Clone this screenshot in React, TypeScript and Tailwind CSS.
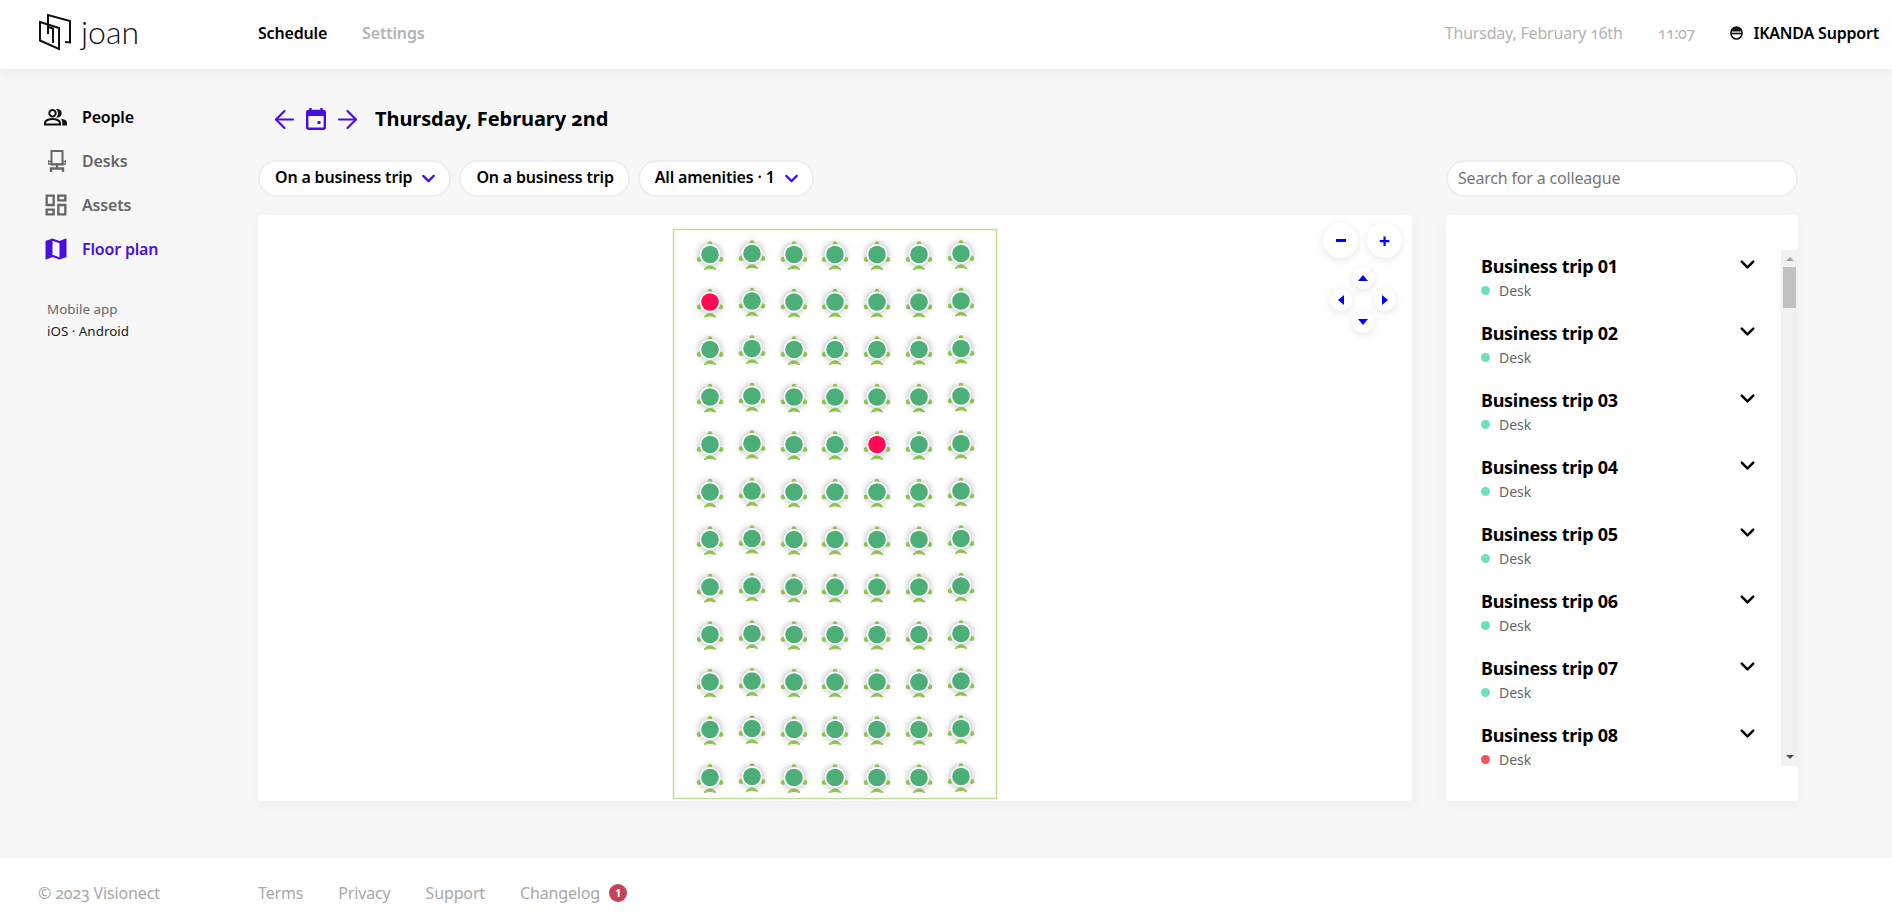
import { ArrowLeft, ArrowRight, ChevronDown } from "lucide-react";
import { MdMap, MdOutlineDashboard } from "react-icons/md";

const COLS = [452, 494, 536, 577, 619, 661, 703];
const ROWS = [39.5, 87, 134.5, 182, 229.5, 277, 324.5, 372, 419.5, 467, 514.5, 562.5];
const RED_PINS = ["1-0", "4-4"];

const trips = [1, 2, 3, 4, 5, 6, 7, 8];

function Logo() {
  return (
    <svg width="33" height="38" viewBox="0 0 33 38" fill="none" stroke="#111" strokeWidth="2">
      <path d="M1 9 L20 15 V36 L1 27.5 Z" />
      <path d="M9 9 V2 L31 8 V29.5 L26 29" />
      <path d="M9 2 V21" />
      <path d="M9 14 L14 15.5 V30" />
    </svg>
  );
}

function PeopleIcon() {
  return (
    <svg width="23" height="17" viewBox="0 0 23 17" fill="none">
      <circle cx="8.5" cy="4.2" r="3.2" stroke="#111" strokeWidth="2" />
      <path d="M13.5 0.8 A3.5 3.5 0 0 1 13.5 7.8 A6 6 0 0 0 13.5 0.8 Z" fill="#111" stroke="#111" strokeWidth="1.4" />
      <path d="M1 15.5 V13.8 C1 11.4 5 10 8.5 10 S16 11.4 16 13.8 V15.5 Z" stroke="#111" strokeWidth="2" />
      <path d="M17 9.8 C20 10.2 23 11.6 23 13.8 V16.5 H18.2 V13.6 C18.2 12 17.8 10.8 17 9.8 Z" fill="#111" />
    </svg>
  );
}

function DeskIcon() {
  return (
    <svg width="18" height="22" viewBox="0 0 18 22" fill="none" stroke="#666" strokeWidth="2">
      <rect x="3.5" y="1" width="11" height="13.5" />
      <path d="M0 11.5 H3 M15 11.5 H18 M0 10 V14 H18 V10" strokeWidth="1.6" />
      <path d="M9 14.5 V18" />
      <path d="M3 22 V18.5 H15 V22" strokeWidth="2.4" />
    </svg>
  );
}

function CalendarIcon() {
  return (
    <svg width="20" height="22" viewBox="0 0 20 22" fill="none">
      <path d="M4.5 0 V3 M15.5 0 V3" stroke="#4a0fe0" strokeWidth="2.4" />
      <rect x="1.2" y="3" width="17.6" height="17.8" rx="1.5" stroke="#4a0fe0" strokeWidth="2.4" />
      <rect x="1" y="3" width="18" height="5" fill="#4a0fe0" />
      <rect x="11.5" y="13" width="3" height="3" fill="#4a0fe0" />
    </svg>
  );
}

function SupportIcon() {
  return (
    <svg width="13" height="14" viewBox="0 0 13 14" fill="none" stroke="#111" strokeWidth="1.6">
      <rect x="1" y="1" width="11" height="12" rx="5.5" />
      <path d="M1 7.5 H12" />
      <path d="M2 5.5 A4.5 4.5 0 0 1 11 5.5 Z" fill="#111" stroke="none" />
    </svg>
  );
}

function Pin({ x, y, red }: { x: number; y: number; red: boolean }) {
  return (
    <g transform={`translate(${x} ${y})`}>
      <circle r="11.5" fill="#000" opacity="0.25" filter="url(#pin-shadow)" />
      <circle cx="0" cy="-11" r="2.2" fill="#8bc34a" />
      <circle cx="-10.8" cy="5" r="2.4" fill="#8bc34a" />
      <circle cx="10.8" cy="5" r="2.4" fill="#8bc34a" />
      <path d="M-6 15 Q0 7.5 6 15 Q0 12.5 -6 15 Z" fill="#8bc34a" stroke="#8bc34a" />
      <circle r="10.5" fill="#fff" />
      <circle r="8.8" fill={red ? "#ff0a55" : "#4caf78"} />
    </g>
  );
}

function FloorPlan() {
  return (
    <svg viewBox="0 0 1154 586" className="block h-full w-full">
      <defs>
        <filter id="pin-shadow" x="-50%" y="-50%" width="200%" height="200%">
          <feGaussianBlur stdDeviation="3" />
        </filter>
      </defs>
      <rect x="415.5" y="14.5" width="323" height="569" fill="#fff" stroke="#bfe08f" strokeWidth="1.5" />
      {ROWS.map((y, r) =>
        COLS.map((x, c) => (
          <Pin key={`${r}-${c}`} x={x} y={y - (c === 1 || c === 6 ? 1 : 0)} red={RED_PINS.includes(`${r}-${c}`)} />
        )),
      )}
    </svg>
  );
}

function MapButton({ label, big, className }: { label: React.ReactNode; big?: boolean; className: string }) {
  return (
    <button
      className={`absolute flex items-center justify-center rounded-full bg-white shadow-[0_2px_8px_rgba(0,0,0,0.1)] ${
        big ? "h-[35px] w-[35px]" : "h-[22px] w-[22px]"
      } ${className}`}
    >
      {label}
    </button>
  );
}

function Tri({ d }: { d: string }) {
  return (
    <svg width="10" height="10" viewBox="0 0 10 10" fill="#0000ff">
      <path d={d} />
    </svg>
  );
}

function NavItem({ icon, label, tone }: { icon: React.ReactNode; label: string; tone: string }) {
  return (
    <div className={`flex h-[44px] items-center text-[16px] font-semibold tracking-[-0.18px] ${tone}`}>
      <div className="flex w-[38px] items-center">{icon}</div>
      {label}
    </div>
  );
}

function Pill({ label, chevron }: { label: string; chevron?: boolean }) {
  return (
    <div
      className={`flex h-[37px] items-center gap-[6px] rounded-full border-2 border-[#eeeeee] bg-white pb-[3px] pl-[15px] text-[16px] font-semibold tracking-[-0.18px] text-black ${
        chevron ? "pr-[10px]" : "pr-[14px]"
      }`}
    >
      {label}
      {chevron && <ChevronDown size={21} strokeWidth={2.6} className="mt-[3px] text-[#4a0fe0]" />}
    </div>
  );
}

function FakeScrollbar() {
  return (
    <div className="flex w-[17px] shrink-0 flex-col items-center bg-[#f1f1f1]">
      <div className="mt-[7px] h-0 w-0 border-x-[4px] border-b-[4px] border-x-transparent border-b-[#a3a3a3]" />
      <div className="mt-[6px] h-[41px] w-[13px] bg-[#c1c1c1]" />
      <div className="mb-[7px] mt-auto h-0 w-0 border-x-[4px] border-t-[4px] border-x-transparent border-t-[#505050]" />
    </div>
  );
}

export default function App() {
  return (
    <div className="flex h-[924px] flex-col overflow-hidden bg-[#f7f7f7] font-['Noto_Sans',sans-serif]">
      <header className="relative z-10 flex h-[69px] items-center bg-white pb-[3px] pl-[39px] pr-[13px] shadow-[0_2px_12px_rgba(0,0,0,0.07)]">
        <div className="-mt-[2px] flex w-[219px] items-center gap-[9px]">
          <Logo />
          <span className="font-['Lato',sans-serif] text-[32px] font-light leading-none text-[#111]">joan</span>
        </div>
        <nav className="flex gap-[35px] text-[16px] font-semibold tracking-[-0.18px]">
          <span className="text-black">Schedule</span>
          <span className="text-[#b3b3b3]">Settings</span>
        </nav>
        <div className="ml-auto flex items-center text-[16px] tracking-[-0.2px]">
          <span className="oldstyle-nums text-[#b3b3b3]">Thursday, February 16th</span>
          <span className="ml-[35px] tracking-[-0.5px] oldstyle-nums text-[#b3b3b3]">11:07</span>
          <span className="ml-[36px] flex items-center gap-[10px] font-semibold text-black">
            <SupportIcon />
            IKANDA Support
          </span>
        </div>
      </header>

      <div className="flex flex-1">
        <aside className="w-[258px] shrink-0 pl-[44px] pt-[26px]">
          <NavItem icon={<PeopleIcon />} label="People" tone="text-black" />
          <NavItem icon={<span className="ml-[4px]"><DeskIcon /></span>} label="Desks" tone="text-[#666]" />
          <NavItem icon={<MdOutlineDashboard size={28} className="-ml-[2px] shrink-0 text-[#666]" />} label="Assets" tone="text-[#666]" />
          <NavItem icon={<MdMap size={28} className="-ml-[2px] shrink-0 text-[#4a0fe0]" />} label="Floor plan" tone="text-[#4a0fe0]" />
          <div className="mt-[27px] pl-[3px] text-[13.4px] leading-[22px]">
            <div className="text-[#666]">Mobile app</div>
            <div className="text-[#222]">iOS · Android</div>
          </div>
        </aside>

        <main className="flex-1 pt-[33px]">
          <div className="flex h-[34px] items-center pl-[12px]">
            <ArrowLeft size={29} strokeWidth={1.8} className="text-[#4a0fe0]" />
            <div className="mx-[7px] flex"><CalendarIcon /></div>
            <ArrowRight size={29} strokeWidth={1.8} className="text-[#4a0fe0]" />
            <h1 className="ml-[13px] text-[20px] font-bold tracking-[-0.08px] oldstyle-nums text-black">Thursday, February 2nd</h1>
          </div>

          <div className="mt-[24px] flex gap-[34px]">
            <div className="w-[1154px]">
              <div className="flex gap-[8px]">
                <Pill label="On a business trip" chevron />
                <Pill label="On a business trip" />
                <Pill label="All amenities · 1" chevron />
              </div>
              <div className="relative mt-[18px] h-[586px] rounded-[4px] bg-white shadow-[0_4px_20px_rgba(0,0,0,0.04)]">
                <FloorPlan />
                <MapButton big className="left-[1065px] top-[8px]" label={<span className="h-[3px] w-[10px] bg-[#0000ff]" />} />
                <MapButton
                  big
                  className="left-[1109px] top-[8px]"
                  label={<span className="text-[20px] font-bold leading-none text-[#0000ff]">+</span>}
                />
                <MapButton className="left-[1094px] top-[52px]" label={<Tri d="M5 2 L10 8 H0 Z" />} />
                <MapButton className="left-[1072px] top-[74px]" label={<Tri d="M8 0 V10 L2 5 Z" />} />
                <MapButton className="left-[1116px] top-[74px]" label={<Tri d="M2 0 V10 L8 5 Z" />} />
                <MapButton className="left-[1094px] top-[96px]" label={<Tri d="M0 2 H10 L5 8 Z" />} />
              </div>
            </div>

            <div className="w-[352px]">
              <div className="flex h-[37px] items-center rounded-full border-2 border-[#eeeeee] bg-white pb-[2px] pl-[10px] text-[16px] tracking-[-0.18px] text-[#777]">
                Search for a colleague
              </div>
              <div className="mt-[18px] h-[586px] rounded-[4px] bg-white pt-[35px] shadow-[0_4px_20px_rgba(0,0,0,0.04)]">
                <div className="flex h-[516px]">
                  <ul className="flex-1">
                    {trips.map((n) => (
                      <li key={n} className="relative h-[67px] pl-[35px] pt-[4px] last:h-[47px]">
                        <div className="text-[18px] font-bold leading-[25px] tracking-[-0.28px] text-black">
                          Business trip {String(n).padStart(2, "0")}
                        </div>
                        <div className="flex h-[22px] items-center gap-[9px] text-[14px] text-[#666]">
                          <span className={`h-[9px] w-[9px] rounded-full ${n === 8 ? "bg-[#f9525a]" : "bg-[#6fe0bd]"}`} />
                          Desk
                        </div>
                        <ChevronDown size={23} strokeWidth={2.6} className="absolute right-[22px] top-[3px] text-black" />
                      </li>
                    ))}
                  </ul>
                  <FakeScrollbar />
                </div>
              </div>
            </div>
          </div>
        </main>
      </div>

      <footer className="flex h-[66px] items-center bg-white pl-[38px] pt-[4px] text-[16px] tracking-[-0.15px] text-[#a8a8a8]">
        <span className="w-[220px] oldstyle-nums">© 2023 Visionect</span>
        <div className="flex items-center gap-[35px]">
          <span>Terms</span>
          <span>Privacy</span>
          <span>Support</span>
          <span className="flex items-center gap-[9px]">
            Changelog
            <span className="flex h-[18px] w-[18px] items-center justify-center rounded-full bg-[#c9405a] text-[11px] font-bold text-white">
              1
            </span>
          </span>
        </div>
      </footer>
    </div>
  );
}
